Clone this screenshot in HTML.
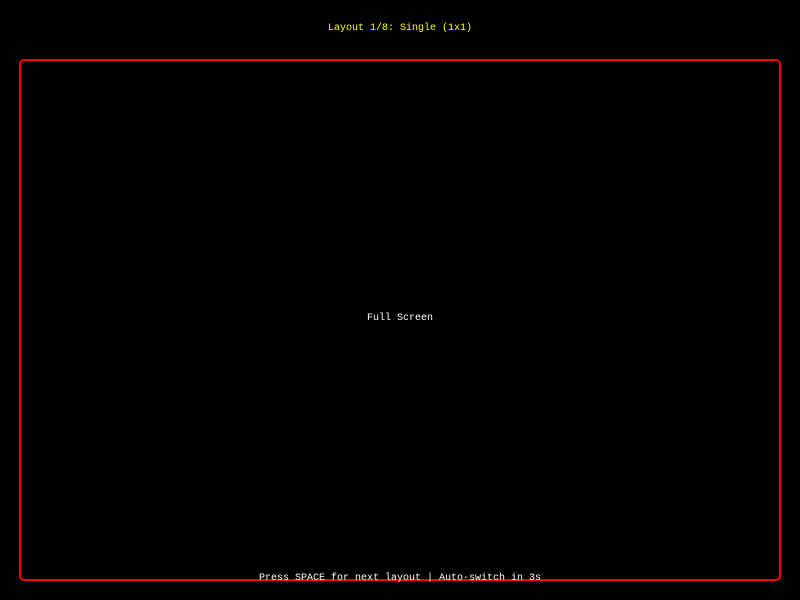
<!DOCTYPE html>
<html><head><style>
html,body{margin:0;padding:0;background:#000;width:800px;height:600px;overflow:hidden;font-family:"Liberation Mono",monospace;font-size:10px;}
.t{position:absolute;left:0;width:800px;text-align:center;white-space:pre;line-height:12px;}
.box{position:absolute;left:19px;top:59px;width:758px;height:518px;border:2px solid #ff0000;border-radius:5px;}
</style></head><body>
<div class="box"></div>
<div class="t" style="top:23px;color:#ffff00">Layout 1/8: Single (1x1)</div>
<div class="t" style="top:313px;color:#fff">Full Screen</div>
<div class="t" style="top:573px;color:#fff">Press SPACE for next layout | Auto-switch in 3s</div>
</body></html>
